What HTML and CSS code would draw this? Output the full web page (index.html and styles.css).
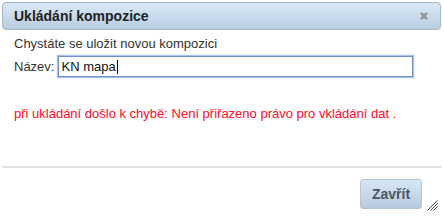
FILE: index.html
```html
<!DOCTYPE html>
<html lang="cs">
<head>
<meta charset="utf-8">
<link rel="stylesheet" href="styles.css">
</head>
<body>
<div class="dialog">
  <div class="titlebar">
    <span class="title">Ukládání kompozice</span>
    <svg class="close" width="8" height="8" viewBox="0 0 8 8">
      <path d="M1 1 L7 7 M7 1 L1 7" stroke="#8a8a8a" stroke-width="2.2"/>
    </svg>
  </div>
  <div class="content">
    <p class="intro">Chystáte se uložit novou kompozici</p>
    <div class="field">
      <label class="label">Název:</label>
      <div class="input">KN mapa<span class="caret"></span></div>
    </div>
    <p class="error">při ukládání došlo k chybě: Není přiřazeno právo pro vkládání dat .</p>
  </div>
  <div class="buttonpane">
    <button class="btn">Zavřít</button>
  </div>
  <svg class="grip" width="11" height="11" viewBox="0 0 11 11">
    <path d="M10.5 0.5 L0.5 10.5 M10.5 3.5 L3.5 10.5 M10.5 6.5 L6.5 10.5" stroke="#444" stroke-width="1"/>
  </svg>
</div>
</body>
</html>
```
FILE: styles.css
```css
html, body { margin: 0; padding: 0; background: #fff; }
body { font-family: "Liberation Sans", Arial, sans-serif; font-size: 13px; color: #333; }
.dialog { position: relative; width: 443px; height: 220px; padding: 2px; box-sizing: border-box; }
.titlebar {
  height: 28px; box-sizing: border-box;
  border: 1px solid #a6b7c7; border-radius: 4px;
  background: linear-gradient(#d9e9f7, #b9cde0);
  display: flex; align-items: center; justify-content: space-between;
  padding: 0 12px 0 11px;
}
.title { font-weight: bold; font-size: 14px; color: #222; }
.close { display: block; }
.content { padding: 5px 12px 0 12px; height: 136px; box-sizing: border-box; }
.intro { margin: 0; line-height: 17px; }
.field { display: flex; align-items: center; margin-top: 4px; }
.label { margin-right: 4px; }
.input {
  width: 355px; height: 21px; box-sizing: border-box;
  border: 1px solid #6e8fc9; box-shadow: 0 0 1px 1px #a8c2ee;
  padding: 2px 2px; line-height: 15px; color: #111;
  display: flex; align-items: center;
}
.caret { display: inline-block; width: 1px; height: 14px; background: #000; margin-left: 1px; }
.error { margin: 29px 0 0 0; color: #ff0a2c; line-height: 15px; }
.buttonpane { border-top: 2px solid #e0e0e0; height: 52px; box-sizing: border-box; display: flex; justify-content: flex-end; padding: 11px 19px 0 0; }
.btn {
  width: 62px; height: 30px; border: 1px solid #b3c4d4; border-radius: 3px;
  background: linear-gradient(#d7e7f5, #b7cadd);
  font-family: "Liberation Sans", Arial, sans-serif; font-weight: bold; font-size: 14px; color: #4a5564;
  padding: 0;
}
.grip { position: absolute; right: 5px; bottom: 9px; }
```
